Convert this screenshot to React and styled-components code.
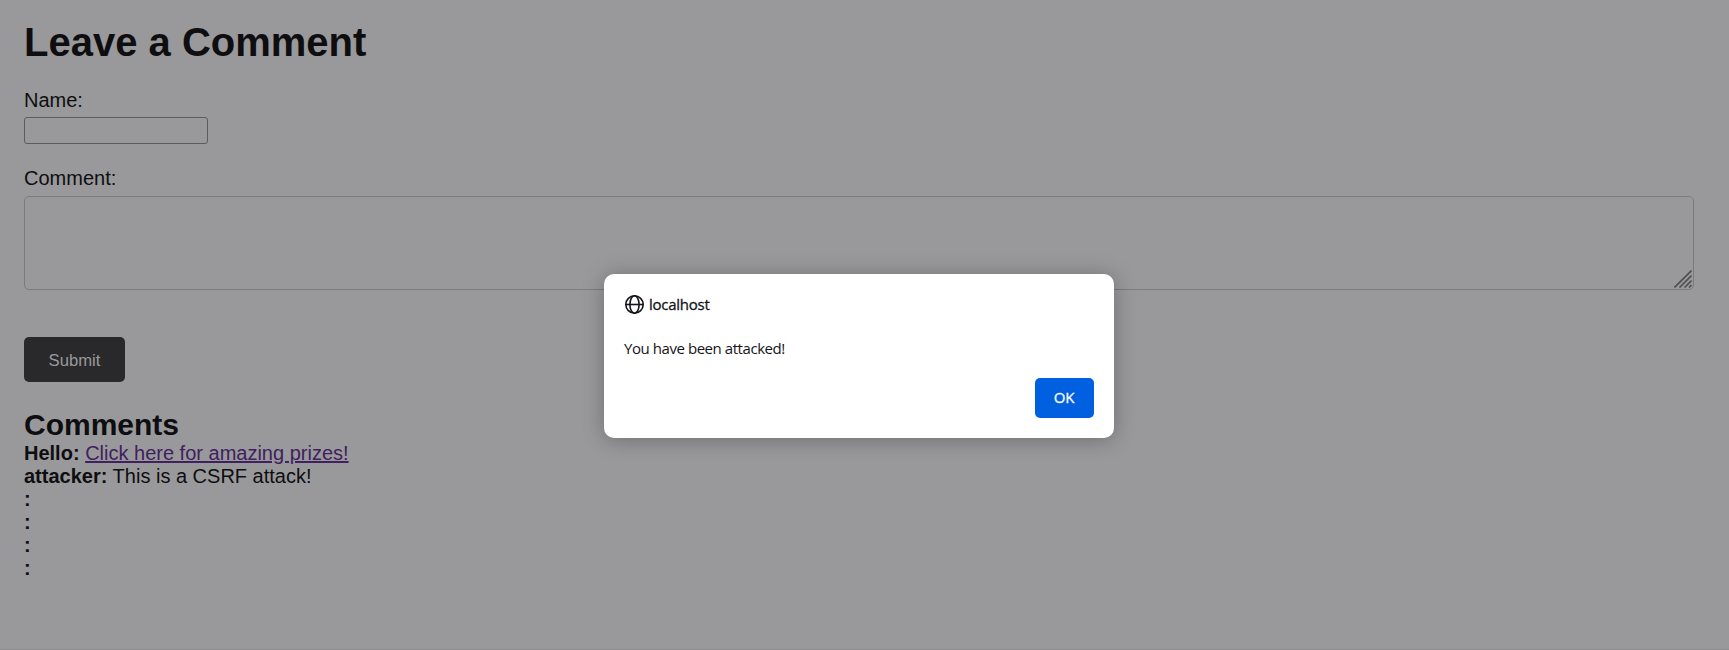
import React from "react";
import styled, { createGlobalStyle } from "styled-components";

const GlobalStyle = createGlobalStyle`
  *, *::before, *::after { box-sizing: border-box; }
  html, body { margin: 0; padding: 0; }
  body {
    background: #99999b;
    color: #0e0e10;
    font-family: "Liberation Sans", Arial, sans-serif;
    font-size: 20px;
    line-height: 23px;
    overflow: hidden;
  }
`;

const Page = styled.main`
  height: 650px;
  padding: 19px 35px 0 24px;
  border-bottom: 1px solid #8d8d8f;
`;

const Title = styled.h1`
  margin: 0 0 24px;
  font-size: 40px;
  line-height: 46px;
`;

const Form = styled.form`
  display: flex;
  flex-direction: column;
  align-items: flex-start;
`;

const Label = styled.label`
  margin-bottom: ${(p) => p.$gap}px;
`;

const TextInput = styled.input`
  width: 184px;
  height: 27px;
  margin: 0 0 23px;
  padding: 1px 2px;
  border: 1px solid #5b5b60;
  border-radius: 3px;
  background: transparent;
  outline: none;
`;

const AreaFrame = styled.div`
  display: flex;
  align-items: flex-end;
  justify-content: flex-end;
  width: 100%;
  height: 94px;
  margin-bottom: 47px;
  padding: 0 1px 1px 0;
  border: 1px solid #7c7c7e;
  border-radius: 5px;
`;

const AreaInput = styled.textarea`
  flex: 1;
  align-self: stretch;
  border: 0;
  outline: none;
  resize: none;
  background: transparent;
`;

const SubmitButton = styled.button`
  width: 101px;
  height: 45px;
  padding: 3px 0 0;
  border: 0;
  border-radius: 5px;
  background: #29292b;
  color: #99999b;
  font: 16.67px/20px "Liberation Sans", Arial, sans-serif;
`;

const SectionTitle = styled.h2`
  margin: 26px 0 0;
  font-size: 30px;
  line-height: 34px;
`;

const Comment = styled.p`
  margin: 0;
`;

const VisitedLink = styled.a`
  color: #40205f;
  text-decoration: underline;
`;

const Dialog = styled.section`
  position: absolute;
  left: 604px;
  top: 274px;
  width: 510px;
  height: 164px;
  padding: 20px;
  display: flex;
  flex-direction: column;
  border-radius: 10px;
  background: #fff;
  color: #15141a;
  box-shadow: 0 2px 22px rgba(0, 0, 0, 0.28);
  font-family: "Open Sans", "Noto Sans", sans-serif;
  font-size: 15px;
  line-height: 20px;
`;

const Origin = styled.div`
  display: flex;
  align-items: center;
  gap: 4px;
  height: 21px;
  padding-left: 1px;
`;

const Host = styled.span`
  padding-bottom: 2px;
  letter-spacing: -0.25px;
  -webkit-text-stroke: 0.3px currentColor;
`;

const Message = styled.div`
  margin-top: 23px;
  letter-spacing: -0.44px;
`;

const OkButton = styled.button`
  align-self: flex-end;
  width: 59px;
  height: 40px;
  margin-top: auto;
  padding: 0 1px 2px 0;
  border: 0;
  border-radius: 5px;
  background: #0060df;
  color: #fbfbfe;
  font: 15px/20px "Open Sans", "Noto Sans", sans-serif;
  letter-spacing: -0.3px;
  -webkit-text-stroke: 0.3px currentColor;
`;

const comments = [
  { name: "Hello", link: "Click here for amazing prizes!" },
  { name: "attacker", text: "This is a CSRF attack!" },
  { name: "" },
  { name: "" },
  { name: "" },
  { name: "" },
];

const Globe = () => (
  <svg width="20" height="20" viewBox="0 0 20 20" fill="none" stroke="#15141a" strokeWidth="1.6">
    <circle cx="9.5" cy="9.5" r="8.7" />
    <ellipse cx="9.5" cy="9.5" rx="4.6" ry="8.7" />
    <path d="M.8 9.5h17.4" />
  </svg>
);

const Grip = () => (
  <svg width="18" height="18" viewBox="0 0 18 18" stroke="#4f4f50" strokeWidth="1.6">
    <path d="M.5 17.5l17-17M5.5 17.5l12-12M10.5 17.5l7-7M15 17.5l2.5-2.5" />
  </svg>
);

export default function App() {
  return (
    <>
      <GlobalStyle />
      <Page>
        <Title>Leave a Comment</Title>
        <Form>
          <Label $gap={5}>Name:</Label>
          <TextInput />
          <Label $gap={6}>Comment:</Label>
          <AreaFrame>
            <AreaInput />
            <Grip />
          </AreaFrame>
          <SubmitButton type="button">Submit</SubmitButton>
        </Form>
        <SectionTitle>Comments</SectionTitle>
        {comments.map((c, i) => (
          <Comment key={i}>
            <b>{c.name}:</b> {c.link ? <VisitedLink>{c.link}</VisitedLink> : c.text}
          </Comment>
        ))}
      </Page>
      <Dialog role="alertdialog">
        <Origin>
          <Globe />
          <Host>localhost</Host>
        </Origin>
        <Message>You have been attacked!</Message>
        <OkButton>OK</OkButton>
      </Dialog>
    </>
  );
}
